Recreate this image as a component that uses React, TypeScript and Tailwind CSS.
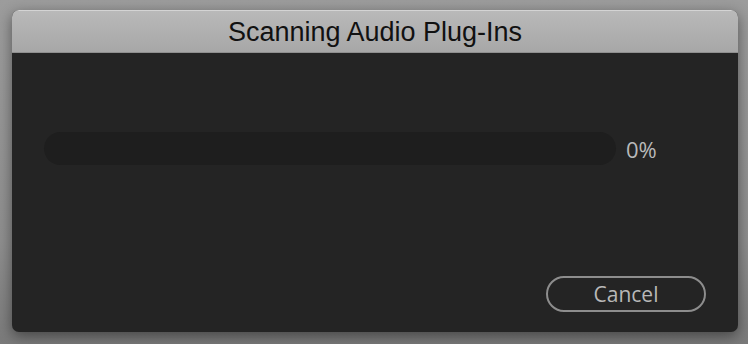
export default function App() {
  return (
    <div className="w-[748px] h-[344px] bg-[linear-gradient(180deg,#9c9c9c_0%,#8e8e8e_70%,#7a7a7a_100%)] pt-[10px] pl-[12px] overflow-hidden">
      <div className="w-[726px] h-[322px] rounded-[7px] overflow-hidden bg-[#242424] flex flex-col shadow-[0_4px_14px_rgba(0,0,0,0.45)]">
        <div className="h-[43px] shrink-0 flex items-center justify-center border-t border-[#d4d4d4] bg-[linear-gradient(180deg,#b9b9b9_0%,#a7a7a7_100%)] border-b border-b-[#8f8f8f]">
          <span className="text-[27px] leading-none text-[#111111] font-['Liberation_Sans',sans-serif] mt-[2px]">
            Scanning Audio Plug-Ins
          </span>
        </div>
        <div className="flex-1 flex flex-col px-[32px]">
          <div className="mt-[79px] flex items-center gap-[10px]">
            <div className="w-[572px] h-[33px] rounded-full bg-[#1e1e1e]" />
            <span className="text-[22px] leading-none text-[#b9b9b9] font-['Open_Sans',sans-serif]">0%</span>
          </div>
          <div className="mt-auto mb-[20px] flex justify-end">
            <button className="w-[160px] h-[36px] rounded-full border-2 border-[#8d8d8d] text-[#b8b8b8] text-[21px] leading-none font-['Open_Sans',sans-serif] flex items-center justify-center">
              Cancel
            </button>
          </div>
        </div>
      </div>
    </div>
  )
}
